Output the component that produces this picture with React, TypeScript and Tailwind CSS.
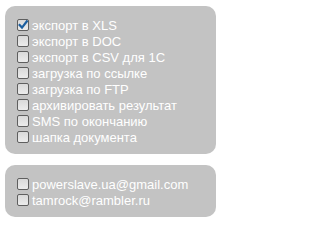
// Export options panels — two rounded grey cards with checkbox rows
const OPTIONS = [
	{ label: "экспорт в XLS", checked: true },
	{ label: "экспорт в DOC" },
	{ label: "экспорт в CSV для 1С" },
	{ label: "загрузка по ссылке" },
	{ label: "загрузка по FTP" },
	{ label: "архивировать результат" },
	{ label: "SMS по окончанию" },
	{ label: "шапка документа" },
]

const EMAILS = ["powerslave.ua@gmail.com", "tamrock@rambler.ru"]

function Box({ checked }: { checked?: boolean }) {
	return (
		<span className="relative w-[12px] h-[12px] shrink-0 rounded-[2px] border border-[#5f5f5f] bg-gradient-to-b from-[#d9d9d9] to-[#ececec]">
			{checked && (
				<svg viewBox="0 0 12 12" className="absolute -left-px -top-px w-[12px] h-[12px]">
					<path d="M2.6 6 L5 8.6 L9.8 2.4" fill="none" stroke="#1b5e9f" strokeWidth="2.2" strokeLinecap="square" />
				</svg>
			)}
		</span>
	)
}

function Row({ label, checked }: { label: string; checked?: boolean }) {
	return (
		<label className="flex items-center gap-[3px] h-[16px]">
			<Box checked={checked} />
			<span>{label}</span>
		</label>
	)
}

export default function App() {
	return (
		<div className="w-[223px] h-[223px] bg-white px-[5px] pt-[6px] flex flex-col gap-[11px] text-[13px] leading-none text-white" style={{ fontFamily: '"Liberation Sans", Arial, sans-serif' }}>
			<div className="w-[211px] rounded-[10px] bg-[#c3c3c3] pl-[12px] pt-[11px] pb-[9px]">
				{OPTIONS.map(o => (
					<Row key={o.label} label={o.label} checked={o.checked} />
				))}
			</div>
			<div className="w-[211px] rounded-[10px] bg-[#c3c3c3] pl-[12px] pt-[11px] pb-[9px]">
				{EMAILS.map(e => (
					<Row key={e} label={e} />
				))}
			</div>
		</div>
	)
}
